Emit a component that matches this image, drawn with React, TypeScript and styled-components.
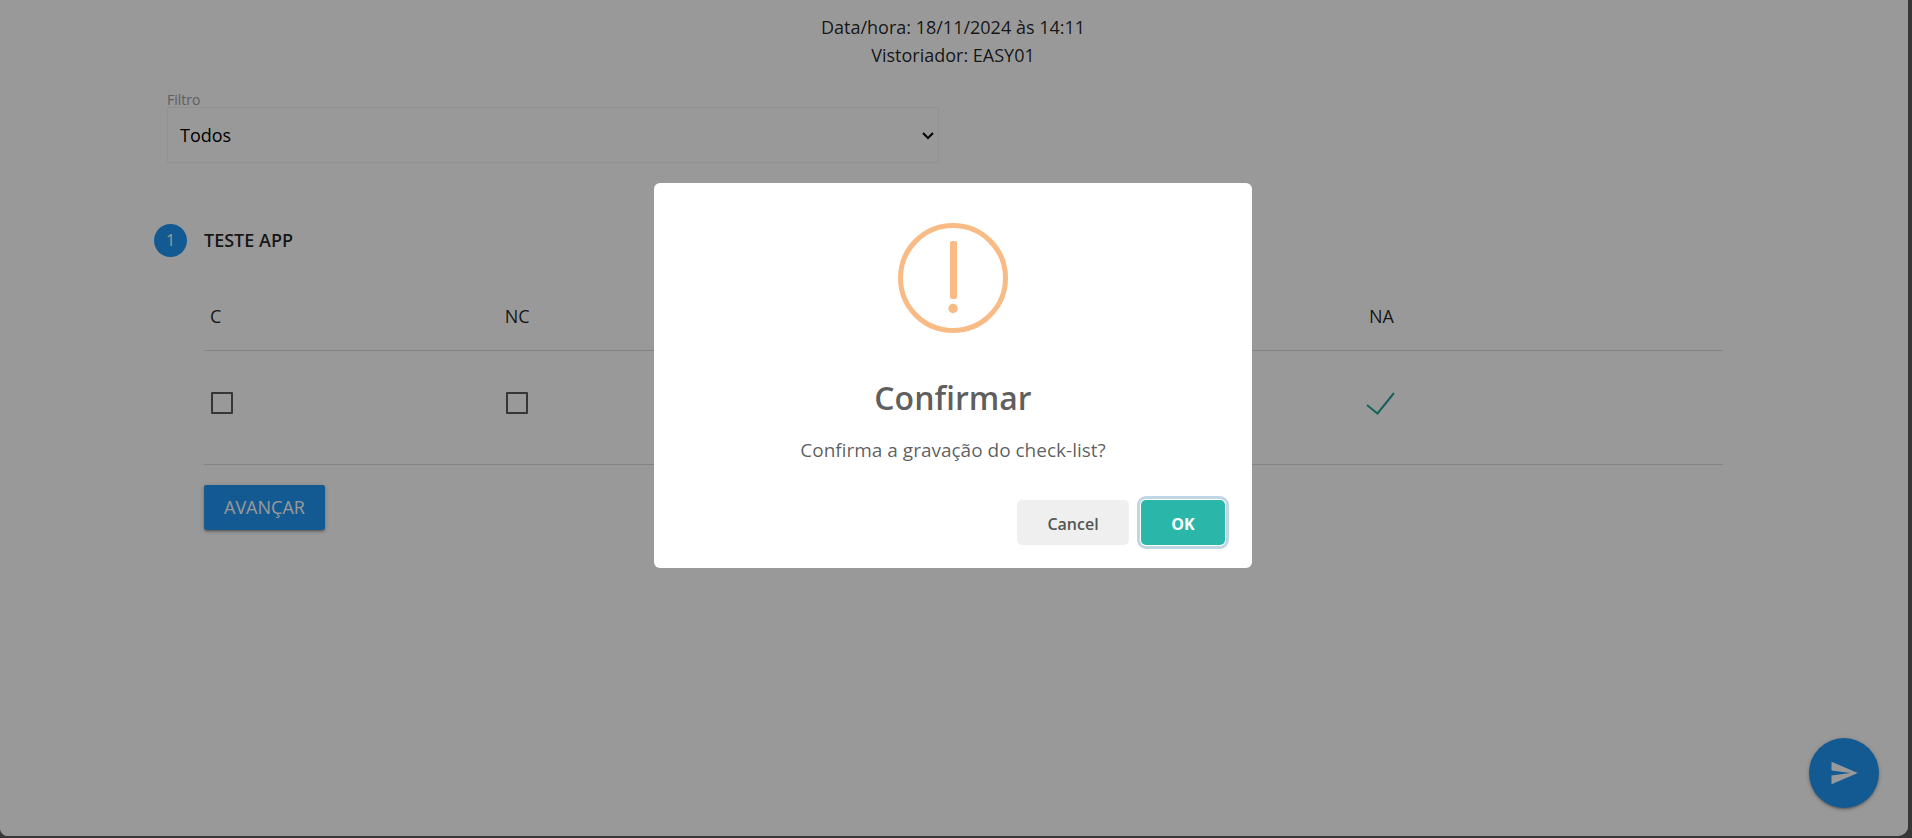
import React from "react";
import styled, { createGlobalStyle } from "styled-components";

const GlobalStyle = createGlobalStyle`
  *, *::before, *::after { box-sizing: border-box; }
  body {
    margin: 0;
    background: #373737;
    color: rgba(0, 0, 0, 0.87);
    font-family: "Open Sans", "Noto Sans", sans-serif;
    font-size: 18px;
    line-height: 28px;
  }
  button, select { font-family: inherit; }
`;

const Frame = styled.div`
  display: flex;
  min-height: 100vh;
  padding: 0 4px 2px 0;
`;

const Page = styled.div`
  position: relative;
  flex: 1;
  overflow: hidden;
  background: #fff;
  border-radius: 0 0 10px 8px;
`;

const Content = styled.main`
  padding: 13px 156px 0 154px;
`;

const Info = styled.header`
  text-align: center;
  p { margin: 0; }
`;

const FilterField = styled.div`
  display: flex;
  flex-direction: column;
  width: 50%;
  padding: 24px 14px 0 13px;
`;

const FilterLabel = styled.label`
  color: #9e9e9e;
  font-size: 14px;
  line-height: 14px;
`;

const SelectBox = styled.div`
  position: relative;
`;

const FilterSelect = styled.select`
  display: block;
  appearance: none;
  width: 100%;
  height: 56px;
  padding: 0 24px 0 12px;
  border: 1px solid #f2f2f2;
  border-radius: 2px;
  background-color: rgba(255, 255, 255, 0.9);
  color: #000;
  font-size: 18px;
`;

const Chevron = styled.svg`
  position: absolute;
  top: 24px;
  right: 5px;
  pointer-events: none;
`;

const StepHeader = styled.div`
  display: flex;
  align-items: center;
  gap: 17px;
  margin-top: 60px;
`;

const StepNumber = styled.span`
  width: 33px;
  height: 33px;
  border-radius: 50%;
  background: #2196f3;
  color: #fff;
  font-size: 16px;
  line-height: 33px;
  text-align: center;
`;

const StepTitle = styled.h2`
  margin: 0;
  font-size: 18px;
  font-weight: 600;
  line-height: 34px;
`;

const StepBody = styled.section`
  padding: 25px 29px 0 50px;
`;

const CheckTable = styled.table`
  width: 100%;
  table-layout: fixed;
  border-collapse: collapse;
  tr { border-bottom: 1px solid #dadada; }
`;

const HeadCell = styled.th<{ $width: string }>`
  width: ${(p) => p.$width};
  height: 68px;
  padding: 0 6px;
  font-size: 18px;
  font-weight: 400;
  text-align: left;
`;

const BodyCell = styled.td`
  height: 114px;
  padding: 0 7px;
`;

const CheckLabel = styled.label`
  position: relative;
  display: block;
  width: 22px;
  height: 22px;
  margin-bottom: 8px;
`;

const CheckInput = styled.input`
  display: block;
  appearance: none;
  width: 22px;
  height: 22px;
  margin: 0;
  border: 2px solid #5a5a5a;
  border-radius: 1px;
  &:checked { border-color: transparent; }
  & + svg { display: none; }
  &:checked + svg { display: block; }
`;

const Tick = styled.svg`
  position: absolute;
  top: 0;
  left: -4px;
  pointer-events: none;
`;

const NextButton = styled.button`
  height: 45px;
  margin-top: 20px;
  padding: 0 20px;
  border: 0;
  border-radius: 2px;
  background: #2196f3;
  box-shadow: 0 2px 2px rgba(0, 0, 0, 0.14), 0 3px 1px -2px rgba(0, 0, 0, 0.12), 0 1px 5px rgba(0, 0, 0, 0.2);
  color: #fff;
  font-size: 18px;
`;

const SendButton = styled.button`
  position: absolute;
  right: 29px;
  bottom: 28px;
  display: flex;
  align-items: center;
  justify-content: center;
  width: 70px;
  height: 70px;
  padding: 0;
  border: 0;
  border-radius: 50%;
  background: #2196f3;
  box-shadow: 0 2px 2px rgba(0, 0, 0, 0.14), 0 3px 1px -2px rgba(0, 0, 0, 0.12), 0 1px 5px rgba(0, 0, 0, 0.2);
  color: #fff;
`;

const Overlay = styled.div`
  position: absolute;
  inset: 0;
  display: flex;
  align-items: center;
  justify-content: center;
  padding: 0 2px 86px 0;
  background: rgba(0, 0, 0, 0.4);
`;

const Modal = styled.div`
  display: flex;
  flex-direction: column;
  align-items: center;
  width: 598px;
  padding: 40px 24px 23px;
  border-radius: 6px;
  background: #fff;
  color: rgba(0, 0, 0, 0.65);
`;

const ModalTitle = styled.h1`
  margin: 43px 0 0;
  font-size: 32px;
  font-weight: 600;
  line-height: 44px;
`;

const ModalText = styled.p`
  margin: 16px 0 0;
  font-size: 19px;
  line-height: 28px;
`;

const ModalFooter = styled.div`
  display: flex;
  align-self: stretch;
  justify-content: flex-end;
  gap: 12px;
  padding: 36px 3px 0 0;
`;

const ModalButton = styled.button<{ $primary?: boolean }>`
  width: ${(p) => (p.$primary ? "84px" : "112px")};
  height: 45px;
  padding: 3px 0 0;
  border: 0;
  border-radius: 5px;
  background: ${(p) => (p.$primary ? "#2ab7a9" : "#efefef")};
  box-shadow: ${(p) => (p.$primary ? "0 0 0 1px #fff, 0 0 0 4px rgba(43, 114, 165, 0.29)" : "none")};
  color: ${(p) => (p.$primary ? "#fff" : "#555")};
  font-size: 16px;
  font-weight: ${(p) => (p.$primary ? 700 : 600)};
`;

function CheckBox({ name, checked }: { name: string; checked?: boolean }) {
  return (
    <CheckLabel>
      <CheckInput type="checkbox" aria-label={name} defaultChecked={checked} />
      <Tick width="30" height="24" viewBox="0 0 30 24" fill="none" stroke="#26a69a" strokeWidth="2">
        <path d="M1 13 L11.500 21.500 L28 1" />
      </Tick>
    </CheckLabel>
  );
}

export default function App() {
  return (
    <>
      <GlobalStyle />
      <Frame>
        <Page>
          <Content>
            <Info>
              <p>Data/hora: 18/11/2024 às 14:11</p>
              <p>Vistoriador: EASY01</p>
            </Info>
            <FilterField>
              <FilterLabel htmlFor="filtro">Filtro</FilterLabel>
              <SelectBox>
                <FilterSelect id="filtro">
                  <option>Todos</option>
                </FilterSelect>
                <Chevron width="12" height="9" viewBox="0 0 12 9" fill="none" stroke="#000" strokeWidth="2">
                  <path d="M1 2 L6 7 L11 2" />
                </Chevron>
              </SelectBox>
            </FilterField>
            <StepHeader>
              <StepNumber>1</StepNumber>
              <StepTitle>TESTE APP</StepTitle>
            </StepHeader>
            <StepBody>
              <CheckTable>
                <thead>
                  <tr>
                    <HeadCell $width="19.4%">C</HeadCell>
                    <HeadCell $width="56.9%">NC</HeadCell>
                    <HeadCell $width="23.7%">NA</HeadCell>
                  </tr>
                </thead>
                <tbody>
                  <tr>
                    <BodyCell><CheckBox name="C" /></BodyCell>
                    <BodyCell><CheckBox name="NC" /></BodyCell>
                    <BodyCell><CheckBox name="NA" checked /></BodyCell>
                  </tr>
                </tbody>
              </CheckTable>
              <NextButton type="button">AVANÇAR</NextButton>
            </StepBody>
          </Content>
          <SendButton type="button" aria-label="Enviar">
            <svg width="30" height="30" viewBox="0 0 24 24" fill="currentColor">
              <path d="M2.010 21L23 12 2.010 3 2 10l15 2-15 2z" />
            </svg>
          </SendButton>
          <Overlay>
            <Modal role="dialog" aria-modal="true" aria-labelledby="modal-title">
              <svg width="110" height="110" viewBox="0 0 110 110" fill="#f8bb86">
                <circle cx="55" cy="55" r="52.500" fill="none" stroke="#f8bb86" strokeWidth="5" />
                <rect x="52" y="18" width="7" height="58" rx="2" />
                <circle cx="55" cy="85.500" r="4.700" />
              </svg>
              <ModalTitle id="modal-title">Confirmar</ModalTitle>
              <ModalText>Confirma a gravação do check-list?</ModalText>
              <ModalFooter>
                <ModalButton type="button">Cancel</ModalButton>
                <ModalButton type="button" $primary>OK</ModalButton>
              </ModalFooter>
            </Modal>
          </Overlay>
        </Page>
      </Frame>
    </>
  );
}
